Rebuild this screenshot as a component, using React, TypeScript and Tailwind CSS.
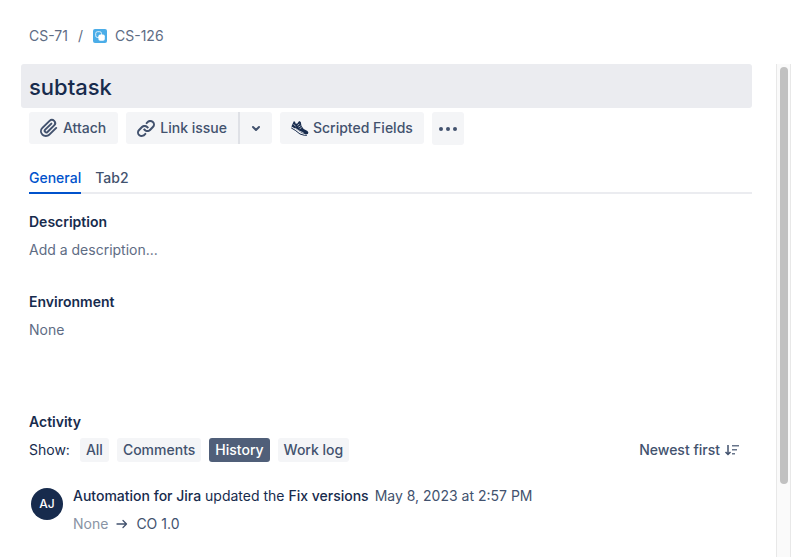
import { ReactNode, useState } from 'react'

const filters = ['All', 'Comments', 'History', 'Work log']
const tabs = ['General', 'Tab2']

function SubtaskIcon() {
  return (
    <svg className="size-3.5" viewBox="0 0 14 14" fill="none" aria-hidden="true">
      <rect width="14" height="14" rx="2" fill="#4bade8" />
      <rect x="2.7" y="2.7" width="5.8" height="5.8" rx="1.8" stroke="#fff" strokeOpacity="0.8" />
      <rect x="5.4" y="5.4" width="6.4" height="6.4" rx="1.8" fill="#fff" />
    </svg>
  )
}

function AttachIcon() {
  return (
    <svg className="size-6" viewBox="0 0 24 24" fill="currentColor" aria-hidden="true">
      <path d="M11.643 17.965c-1.53 1.495-4.016 1.496-5.542.004a3.773 3.773 0 0 1 .002-5.412l7.147-6.985a2.316 2.316 0 0 1 3.233-.003c.893.873.895 2.282.004 3.153l-6.703 6.55a.653.653 0 0 1-.914-.008.62.62 0 0 1 0-.902l6.229-6.087a.941.941 0 0 0 0-1.353.995.995 0 0 0-1.384 0l-6.23 6.087a2.502 2.502 0 0 0 0 3.607 2.643 2.643 0 0 0 3.683.009l6.703-6.55a4.174 4.174 0 0 0-.003-5.86 4.318 4.318 0 0 0-6-.002l-7.148 6.985a5.655 5.655 0 0 0-.002 8.118c2.292 2.235 6.017 2.236 8.31-.004l6.9-6.742a.941.941 0 0 0 0-1.353.995.995 0 0 0-1.385 0l-6.9 6.748z" />
    </svg>
  )
}

function LinkIcon() {
  return (
    <svg className="size-6" viewBox="0 0 24 24" fill="currentColor" aria-hidden="true">
      <path d="M12.856 5.457l-.937.92a1.002 1.002 0 0 0 0 1.437 1.047 1.047 0 0 0 1.463 0l.984-.966c.967-.95 2.542-1.135 3.602-.288a2.54 2.54 0 0 1 .203 3.81l-2.903 2.852a2.646 2.646 0 0 1-3.696 0l-1.11-1.09L9 13.57l1.108 1.089c1.822 1.788 4.802 1.788 6.622 0l2.905-2.852a4.558 4.558 0 0 0-.357-6.82c-1.893-1.517-4.695-1.226-6.422.47" />
      <path d="M11.144 19.543l.937-.92a1.002 1.002 0 0 0 0-1.437 1.047 1.047 0 0 0-1.462 0l-.985.966c-.967.95-2.542 1.135-3.602.288a2.54 2.54 0 0 1-.203-3.81l2.903-2.852a2.646 2.646 0 0 1 3.696 0l1.11 1.09L15 11.43l-1.108-1.089c-1.822-1.788-4.802-1.788-6.622 0l-2.905 2.852a4.558 4.558 0 0 0 .357 6.82c1.893 1.517 4.695 1.226 6.422-.47" />
    </svg>
  )
}

function ShoeIcon() {
  return (
    <svg className="h-4 w-5" viewBox="0 0 20 16" fill="none" aria-hidden="true">
      <path d="M2.4 6.4 4.8 1.2l1.3.5.4 1.8 1.6.2L10.2 1l1.6.9.7 4.2 2.2 3 3.8 1.9.9 1.8-.6 1.2-2.2.3-3.8-1.3-5-3.6-3.6-2z" fill="#172b4d" />
      <path d="m2.2 7.9 4 2.4 4.8 3.7 4.4 1.3 2.6-.1" stroke="#172b4d" />
      <path d="m4.6 4.2 2 2.2M8.4 5.4l2-1.3M9.4 7.1l2.2-1.2M10.6 8.7l2-1.1M6 8.1l4.6 3 4 1.8" stroke="#f4f5f7" strokeWidth="0.7" />
    </svg>
  )
}

function ChevronDownIcon() {
  return (
    <svg className="size-4" viewBox="0 0 16 16" fill="none" stroke="currentColor" strokeWidth="2" strokeLinecap="round" strokeLinejoin="round" aria-hidden="true">
      <path d="m5 7 3 3 3-3" />
    </svg>
  )
}

function MoreIcon() {
  return (
    <svg className="size-6" viewBox="0 0 24 24" fill="currentColor" aria-hidden="true">
      <circle cx="5" cy="12" r="2" />
      <circle cx="12" cy="12" r="2" />
      <circle cx="19" cy="12" r="2" />
    </svg>
  )
}

function SortIcon() {
  return (
    <svg className="size-4" viewBox="0 0 16 16" fill="none" stroke="currentColor" strokeWidth="1.5" aria-hidden="true">
      <path d="M4 3v9M1.5 10 4 12.5 6.5 10" />
      <path d="M8 3.8h7M8 7.8h5M8 11.8h3" strokeOpacity="0.8" />
    </svg>
  )
}

function ArrowIcon() {
  return (
    <svg className="size-4" viewBox="0 0 16 16" fill="none" stroke="currentColor" strokeWidth="1.3" strokeLinecap="round" strokeLinejoin="round" aria-label="changed to">
      <path d="M3 8h9.5M9 4.5 12.5 8 9 11.5" />
    </svg>
  )
}

function Field({ label, children }: { label: string; children: ReactNode }) {
  return (
    <section className="pb-8">
      <h2 className="font-semibold">{label}</h2>
      <div className="mt-2 text-[#5e6c84]">{children}</div>
    </section>
  )
}

export default function App() {
  const [tab, setTab] = useState('General')
  const [filter, setFilter] = useState('History')

  return (
    <div className="flex min-h-screen flex-col bg-white font-['Inter',sans-serif] text-sm text-[#172b4d]">
      <nav aria-label="Breadcrumbs" className="flex h-16 items-center px-[29px] pt-2 text-[#5e6c84]">
        <a href="#CS-71">CS-71</a>
        <span className="px-2.5">/</span>
        <a href="#CS-126" className="flex items-center gap-2">
          <SubtaskIcon />
          CS-126
        </a>
      </nav>

      <div className="flex flex-1">
        <main className="flex-1 pr-6 pl-[21px]">
          <h1 className="rounded-[3px] bg-[#ebecf0] px-2 pt-[7px] pb-[5px] text-[22px] leading-8 font-medium">subtask</h1>

          <div className="pl-2">
            {/* Quick actions */}
            <div className="mt-1 flex items-start gap-2 font-medium text-[#42526e]">
              <button className="flex h-8 items-center rounded-[3px] bg-[#f4f5f7] pr-3 pl-2">
                <AttachIcon />
                <span className="pl-0.5">Attach</span>
              </button>
              <div className="flex">
                <button className="flex h-8 items-center rounded-l-[3px] bg-[#f4f5f7] pr-[11px] pl-2">
                  <LinkIcon />
                  <span className="pl-0.5">Link issue</span>
                </button>
                <div className="h-8 w-0.5 bg-[#dfe1e6]" />
                <button aria-label="More link options" className="flex h-8 w-8 items-center justify-center rounded-r-[3px] bg-[#f4f5f7]">
                  <ChevronDownIcon />
                </button>
              </div>
              <button className="flex h-8 items-center gap-1 rounded-[3px] bg-[#f4f5f7] pr-[11px] pl-[9px]">
                <ShoeIcon />
                Scripted Fields
              </button>
              <button aria-label="More actions" className="flex h-[33px] w-8 items-center justify-center rounded-[3px] bg-[#f4f5f7]">
                <MoreIcon />
              </button>
            </div>

            <div role="tablist" className="mt-[19px] flex gap-3.5 border-b-2 border-[#ebecf0] font-medium">
              {tabs.map((name) => (
                <button
                  key={name}
                  role="tab"
                  aria-selected={tab === name}
                  onClick={() => setTab(name)}
                  className={`-mb-0.5 border-b-2 pt-1 pb-1 ${
                    tab === name ? 'border-[#0052cc] text-[#0052cc]' : 'border-transparent text-[#42526e]'
                  }`}
                >
                  {name}
                </button>
              ))}
            </div>

            <div className="pt-4.5">
              <Field label="Description">Add a description...</Field>
              <Field label="Environment">None</Field>
            </div>

            {/* Activity */}
            <section className="pt-10">
              <h2 className="font-semibold">Activity</h2>
              <div className="mt-1.5 flex items-center justify-between pr-3">
                <div className="flex items-center gap-2">
                  <span className="pr-0.5">Show:</span>
                  {filters.map((name) => (
                    <button
                      key={name}
                      aria-pressed={filter === name}
                      onClick={() => setFilter(name)}
                      className={`h-6 rounded-[3px] px-1.5 font-medium ${
                        filter === name ? 'bg-[#505f79] text-white' : 'bg-[#f4f5f7] text-[#42526e]'
                      }`}
                    >
                      {name}
                    </button>
                  ))}
                </div>
                <button className="flex items-center gap-1 font-medium text-[#42526e]">
                  Newest first
                  <SortIcon />
                </button>
              </div>

              <div className="mt-6 flex gap-2.5 pl-0.5">
                <div className="mt-0.5 flex size-8 shrink-0 items-center justify-center rounded-full bg-[#172b4d] text-xs font-medium text-white">
                  AJ
                </div>
                <div>
                  <p>
                    <span className="font-medium">Automation for Jira</span> updated the{' '}
                    <span className="font-medium">Fix versions</span>
                    <time dateTime="2023-05-08T14:57" className="pl-1.5 text-[#42526e]">
                      May 8, 2023 at 2:57 PM
                    </time>
                  </p>
                  <p className="mt-2 flex items-center gap-1.5 text-[#42526e]">
                    <span className="text-[#8993a4]">None</span>
                    <ArrowIcon />
                    CO 1.0
                  </p>
                </div>
              </div>
            </section>
          </div>
        </main>

        {/* Scroll track */}
        <div aria-hidden="true" className="mr-px flex w-[15px] justify-center border-x border-[#e8e8e8] bg-[#fafafa] pt-[3px]">
          <div className="h-[85%] w-2 rounded-full bg-[#c1c1c1]" />
        </div>
      </div>
    </div>
  )
}
